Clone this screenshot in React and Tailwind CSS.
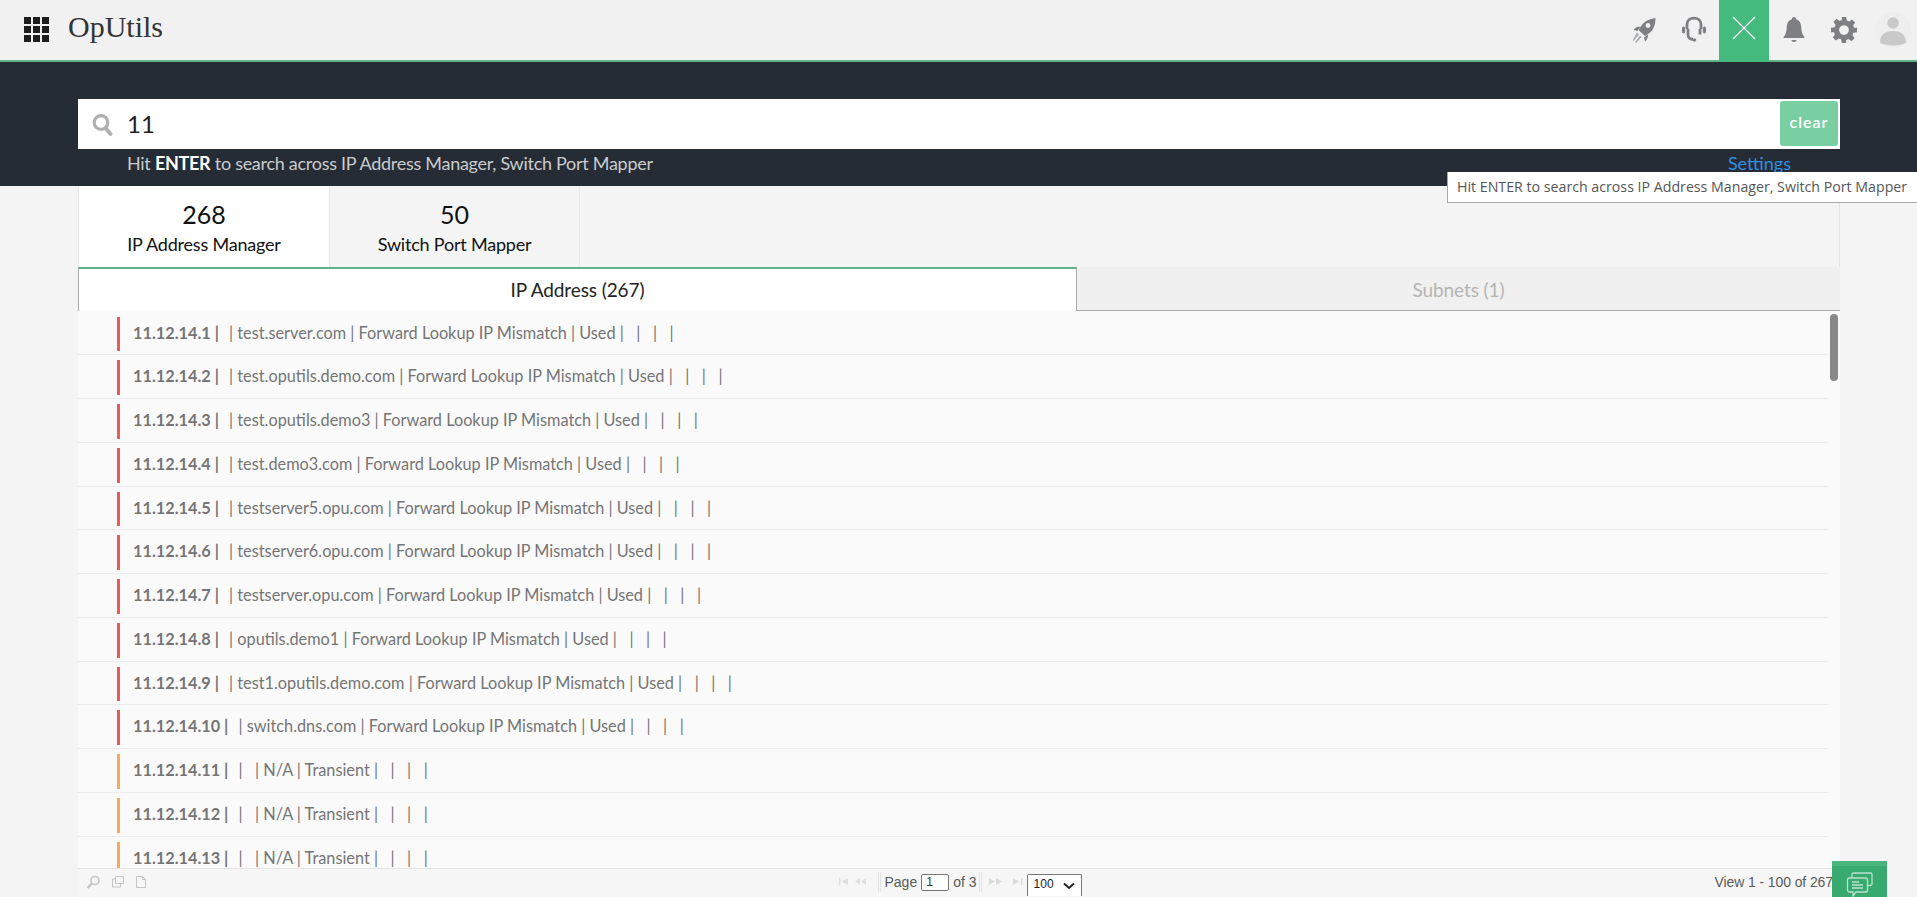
import React from "react";

const rows = [
  ["11.12.14.1", "test.server.com | Forward Lookup IP Mismatch | Used |   |   |   |", "r"],
  ["11.12.14.2", "test.oputils.demo.com | Forward Lookup IP Mismatch | Used |   |   |   |", "r"],
  ["11.12.14.3", "test.oputils.demo3 | Forward Lookup IP Mismatch | Used |   |   |   |", "r"],
  ["11.12.14.4", "test.demo3.com | Forward Lookup IP Mismatch | Used |   |   |   |", "r"],
  ["11.12.14.5", "testserver5.opu.com | Forward Lookup IP Mismatch | Used |   |   |   |", "r"],
  ["11.12.14.6", "testserver6.opu.com | Forward Lookup IP Mismatch | Used |   |   |   |", "r"],
  ["11.12.14.7", "testserver.opu.com | Forward Lookup IP Mismatch | Used |   |   |   |", "r"],
  ["11.12.14.8", "oputils.demo1 | Forward Lookup IP Mismatch | Used |   |   |   |", "r"],
  ["11.12.14.9", "test1.oputils.demo.com | Forward Lookup IP Mismatch | Used |   |   |   |", "r"],
  ["11.12.14.10", "switch.dns.com | Forward Lookup IP Mismatch | Used |   |   |   |", "r"],
  ["11.12.14.11", "  | N/A | Transient |   |   |   |", "o"],
  ["11.12.14.12", "  | N/A | Transient |   |   |   |", "o"],
  ["11.12.14.13", "  | N/A | Transient |   |   |   |", "o"],
];

const Rocket = () => (
  <svg width="26" height="27" viewBox="0 0 26 27" fill="#7d7f82">
    <path d="M24.500 1C18 1.800 13.500 4.500 10.500 8.500L7.500 13l6.500 6 4.500-3c3.800-3 6-8 6-15z" />
    <circle cx="17" cy="8.500" r="2.400" fill="#f1f1f1" />
    <path d="M2.500 13c1.500-2.500 4-3.500 7-3.500L6.500 14zM14 24.500c2-1.500 3-4 3-7L13 20.500z" />
    <path d="M6 15.500 8 17.500 2.500 24l-.8-.8zM9 18.500l1.600 1.600-5.500 6-1-1z" opacity=".6" />
  </svg>
);
const Headset = () => (
  <svg width="26" height="28" viewBox="0 0 26 28" fill="none" stroke="#7d7f82" strokeWidth="2.800">
    <path d="M6 13V8.500C6 4.500 9 2.200 13 2.200s7 2.300 7 6.300V13" />
    <path d="M7 13v5.500c0 3.200 2.200 4.800 5 5" />
    <path d="M19 13v5.500" />
    <rect x="1.500" y="11" width="2.200" height="6" rx="1" fill="#7d7f82" strokeWidth="1" />
    <rect x="22.300" y="11" width="2.200" height="6" rx="1" fill="#7d7f82" strokeWidth="1" />
    <circle cx="13.500" cy="24" r="1.300" fill="#7d7f82" strokeWidth="1" />
  </svg>
);
const Bell = () => (
  <svg width="22" height="28" viewBox="0 0 22 28" fill="#7d7f82">
    <path d="M11 1c1.200 0 2 .9 2 2.200 3.500 1 5 4 5.200 7.500.2 4 .8 7.800 3.300 10.300V22H.5v-1c2.500-2.500 3.100-6.300 3.300-10.300C4 7.200 5.500 4.200 9 3.200 9 1.900 9.800 1 11 1z" />
    <path d="M8.500 24h5c0 1.300-1.100 2-2.500 2s-2.500-.7-2.500-2z" />
  </svg>
);
const Gear = () => (
  <svg width="26" height="26" viewBox="0 0 24 24" fill="#7d7f82">
    <path fillRule="evenodd" d="M10 0h4l.6 3.300 2.100.9 2.800-1.900 2.800 2.800-1.900 2.800.9 2.100L24 10v4l-3.300.6-.9 2.100 1.900 2.800-2.800 2.800-2.800-1.900-2.100.9L14 24h-4l-.6-3.300-2.100-.9-2.800 1.900-2.800-2.800 1.900-2.800-.9-2.100L0 14v-4l3.300-.6.9-2.100-1.900-2.800 2.800-2.800 2.800 1.900 2.100-.9zM12 7.500a4.500 4.500 0 1 0 0 9 4.500 4.500 0 0 0 0-9z" />
  </svg>
);
const Avatar = () => (
  <div className="w-[36px] h-[36px] rounded-full bg-[#eeeeee] flex items-center justify-center overflow-hidden">
    <svg width="28" height="32" viewBox="0 0 28 32" fill="#c9c9c9">
      <circle cx="14" cy="9" r="5.800" />
      <path d="M1 29c0-9 5.500-12 13-12s13 3 13 12c-3 1.500-8 2.500-13 2.500s-10-1-13-2.500z" />
    </svg>
  </div>
);
const Magnifier = () => (
  <svg width="21" height="23" viewBox="0 0 21 23" fill="none" stroke="#b0b0b0">
    <circle cx="9" cy="9.500" r="6.800" strokeWidth="3.200" />
    <path d="M13.500 15l5 6" strokeWidth="3.800" strokeLinecap="round" />
  </svg>
);

const Row = ({ ip, rest, c }) => (
  <div className="h-[43.75px] shrink-0 mr-[12px] border-b border-[#ebebeb] flex items-center pl-[40px] relative font-['Lato',sans-serif] text-[16.300px] text-[#757575] whitespace-pre">
    <div className={`absolute left-[39px] top-[5px] bottom-[3px] w-[3px] ${c === "r" ? "bg-[#e35d5d]" : "bg-[#f0ad5e]"}`} />
    <span className="ml-[15px] font-bold text-[16.300px]">{ip} | </span>
    <span className="ml-[2px]"> | {rest}</span>
  </div>
);

export default function App() {
  return (
    <div className="relative h-[897px] w-full overflow-hidden bg-[#f4f4f4] flex flex-col font-['Lato',sans-serif]">
      <header className="h-[62px] shrink-0 bg-[#f1f1f1] border-b-[2px] border-[#5fb586] flex items-stretch">
        <div className="ml-[24px] mt-[17px] grid grid-cols-3 gap-[2px] w-[25px] h-[25px]">
          {Array.from({ length: 9 }).map((_, i) => (
            <div key={i} className="bg-[#1d1d1d] w-[7px] h-[7px]" />
          ))}
        </div>
        <div className="ml-[19px] mt-[11px] text-[30px] leading-[32px] font-['Liberation_Serif',serif] text-[#333333] h-[32px]">OpUtils</div>
        <div className="ml-auto flex items-stretch h-[60px]">
          <div className="w-[50px] flex items-center justify-center"><Rocket /></div>
          <div className="w-[50px] flex items-center justify-center"><Headset /></div>
          <div className="w-[50px] h-[62px] bg-[#44bb7d] flex items-center justify-center pb-[7px] -mb-[2px]">
            <svg width="24" height="24" viewBox="0 0 24 24" stroke="#ffffff" strokeWidth="1.100"><path d="M1 1l22 22M23 1L1 23" /></svg>
          </div>
          <div className="w-[50px] flex items-center justify-center"><Bell /></div>
          <div className="w-[50px] flex items-center justify-center"><Gear /></div>
          <div className="w-[48px] flex items-center justify-center"><Avatar /></div>
        </div>
      </header>

      <section className="h-[124px] shrink-0 bg-[#262c35] pt-[37px] pl-[78px] pr-[77px]">
        <div className="h-[50px] bg-white flex items-center pr-[2px]">
          <div className="ml-[14px] mt-[1px]"><Magnifier /></div>
          <span className="ml-[14px] text-[24px] text-[#1f1f1f]">11</span>
          <div className="ml-auto w-[58px] h-[45px] bg-[#7acfa2] rounded-[3px] flex items-center justify-center text-white text-[16px] font-semibold tracking-[1px] mb-[2px] pb-[2px]">clear</div>
        </div>
        <div className="flex justify-between pl-[49px] pr-[49px] mt-[2px] text-[18px] leading-[24px] tracking-[-0.280px] text-[#c9cbcd]">
          <span>Hit <b className="text-white">ENTER</b> to search across IP Address Manager, Switch Port Mapper</span>
          <span className="text-[#2f8fe0] tracking-normal">Settings</span>
        </div>
      </section>

      <main className="flex-1 min-h-0 ml-[78px] mr-[77px] flex flex-col bg-[#fafafa]">
        <div className="h-[81px] shrink-0 flex bg-[#f4f4f4] border-r border-[#e4e4e4]">
          <div className="w-[251px] bg-white border-l border-[#e4e4e4] flex flex-col items-center pt-[12px] text-[#111]">
            <div className="text-[25px] leading-[33px]">268</div>
            <div className="text-[18px] leading-[26px] tracking-[-0.200px]">IP Address Manager</div>
          </div>
          <div className="w-[251px] border-r border-l border-[#e9e9e9] flex flex-col items-center pt-[12px] text-[#111]">
            <div className="text-[25px] leading-[33px]">50</div>
            <div className="text-[18px] leading-[26px] tracking-[-0.200px]">Switch Port Mapper</div>
          </div>
        </div>
        <div className="h-[44px] shrink-0 flex">
          <div className="w-[999px] bg-white border-t-[2px] border-[#61b287] border-l border-l-[#aaaaaa] border-r border-r-[#aaaaaa] flex items-center justify-center text-[19px] tracking-[-0.100px] text-[#222]">IP Address (267)</div>
          <div className="flex-1 bg-[#f0f0f0] border-b border-[#aaaaaa] flex items-center justify-center text-[19px] tracking-[-0.100px] text-[#b5b5b5] pt-[3px]">Subnets (1)</div>
        </div>
        <div className="flex-1 min-h-0 relative overflow-hidden flex flex-col pt-[0.5px]">
          {rows.map((r) => (
            <Row key={r[0]} ip={r[0]} rest={r[1]} c={r[2]} />
          ))}
          <div className="absolute right-[2px] top-[3px] w-[8px] h-[67px] rounded-full bg-[#888888]" />
        </div>
        <div className="h-[29px] shrink-0 border-t border-[#e2e2e2] bg-[#f6f6f6] relative flex items-center justify-center font-['Liberation_Sans',sans-serif] text-[14px] text-[#5a5a5a] overflow-hidden">
          <div className="absolute left-[8px] top-[6px] flex items-center gap-[10px]">
            <svg width="15" height="14" viewBox="0 0 15 14" fill="none" stroke="#c4c4c4" strokeWidth="1.600"><circle cx="9" cy="5.500" r="4" /><path d="M6 8.500 1.500 13" strokeWidth="2.400" /></svg>
            <svg width="14" height="14" viewBox="0 0 14 14" fill="none" stroke="#c4c4c4"><path d="M4.500 1.500h8v7h-8zM4.500 4h-3v8h8V8.500" /></svg>
            <svg width="12" height="14" viewBox="0 0 12 14" fill="none" stroke="#c4c4c4"><path d="M1.500 1.500h6l3 3v8h-9zM7.500 1.500v3h3" /></svg>
          </div>
          <div className="flex items-center ml-[2px] -mt-[2px]">
            <svg width="40" height="10" viewBox="0 0 40 10" fill="#e0e0e0"><path d="M1 1h1.500v7H1zM10 1v7L3.500 4.500zM22 1v7l-5-3.500zM28 1v7l-5-3.500z" /></svg>
            <div className="w-[3px] h-[20px] border-x border-[#e4e4e4] mr-[3px]" />
            <span>Page</span>
            <input readOnly value="1" className="w-[28px] h-[17px] ml-[4px] mr-[4px] border border-[#777] rounded-[2px] bg-white text-[12px] text-[#333] pl-[4px] outline-none" />
            <span>of 3</span>
            <div className="w-[3px] h-[20px] border-x border-[#e4e4e4] ml-[2px] mr-[6px]" />
            <svg width="38" height="10" viewBox="0 0 38 10" fill="#dcdcdc"><path d="M1 1v7l6-3.500zM8 1v7l6-3.500zM25 1v7l6-3.500zM33 1h1.500v7H33z" /></svg>
            <div className="relative w-[55px] h-[22px] ml-[1px] mt-[5px] border border-[#777] border-b-0 rounded-t-[2px] bg-white text-[12px] text-[#222] pl-[6px] leading-[19px]">
              100
              <svg className="absolute right-[6px] top-[7px]" width="12" height="8" viewBox="0 0 12 8" fill="none" stroke="#222" strokeWidth="2"><path d="M1 1.500 6 6l5-4.500" /></svg>
            </div>
          </div>
          <div className="absolute right-[7px] top-[3px] text-[14px] tracking-[-0.100px]">View 1 - 100 of 267</div>
        </div>
      </main>

      <div className="absolute left-[1447px] top-[172px] h-[31px] w-[470px] bg-white border-b border-l border-[#a8a8a8] flex items-center pl-[9px] pb-[1px] font-['Open_Sans',sans-serif] text-[14.200px] text-[#555]">
        Hit ENTER to search across IP Address Manager, Switch Port Mapper
      </div>
      <div className="absolute left-[1832px] top-[861px] w-[55px] h-[36px] bg-[#38aa6f] border-t-[5px] border-[#48b57d] flex items-center justify-center">
        <svg width="28" height="28" viewBox="0 0 28 28" fill="none" stroke="#b9e4cc" strokeWidth="1.300" className="mt-[6px]">
          <path d="M6 6V3.500C6 2.500 6.800 2 7.500 2h17c1 0 1.500.7 1.500 1.500V13c0 1-.7 1.500-1.500 1.500H22" />
          <path d="M3.500 7h16c1 0 2 .8 2 2v10c0 1-.8 2-2 2H10l-3 4v-4H3.500c-1 0-2-.8-2-2V9c0-1 .8-2 2-2z" fill="#38aa6f" />
          <path d="M6 11h7M6 14h11M6 17h11" />
        </svg>
      </div>
    </div>
  );
}
